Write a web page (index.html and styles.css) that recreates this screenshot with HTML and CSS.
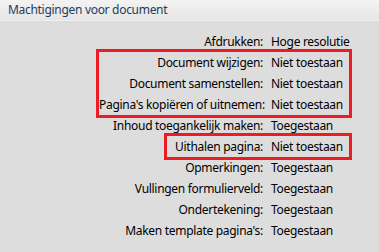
FILE: index.html
```html
<!DOCTYPE html>
<html lang="nl">
<head>
  <meta charset="UTF-8" />
  <title>Machtigingen voor document</title>
  <link rel="stylesheet" href="styles.css">
</head>
<body>
  <div class="panel">
    <div class="panel-header">Machtigingen voor document</div>

    <div class="list">
      <div class="row"><span class="label">Afdrukken:</span><span class="value">Hoge resolutie</span></div>

      <!-- gemarkeerd -->
      <div class="box box-wide">
        <div class="row"><span class="label">Document wijzigen:</span><span class="value">Niet toestaan</span></div>
        <div class="row"><span class="label">Document samenstellen:</span><span class="value">Niet toestaan</span></div>
        <div class="row"><span class="label">Pagina's kopiëren of uitnemen:</span><span class="value">Niet toestaan</span></div>
      </div>

      <div class="row"><span class="label">Inhoud toegankelijk maken:</span><span class="value">Toegestaan</span></div>

      <div class="box box-narrow">
        <div class="row"><span class="label">Uithalen pagina:</span><span class="value">Niet toestaan</span></div>
      </div>

      <div class="row"><span class="label">Opmerkingen:</span><span class="value">Toegestaan</span></div>
      <div class="row"><span class="label">Vullingen formulierveld:</span><span class="value">Toegestaan</span></div>
      <div class="row"><span class="label">Ondertekening:</span><span class="value">Toegestaan</span></div>
      <div class="row"><span class="label">Maken template pagina's:</span><span class="value">Toegestaan</span></div>
    </div>
  </div>
</body>
</html>
```
FILE: styles.css
```css
body {
  margin: 0;
  padding: 0;
  font-family: "Noto Sans", "Open Sans", sans-serif;
  font-size: 12px;
  letter-spacing: -0.3px;
  color: #000;
  background: #dddddd;
}

.panel {
  width: 379px;
  height: 252px;
  overflow: hidden;
}

.panel-header {
  height: 20px;
  line-height: 20px;
  padding-left: 8px;
  font-size: 12px;
  color: #1e3a5f;
  background: linear-gradient(to bottom, #f3f3f3, #e6e6e6);
  border-bottom: 1px solid #f0f0f0;
}

.list {
  padding-top: 10px;
}

.row {
  display: flex;
  align-items: center;
  height: 21px;
  white-space: nowrap;
}

.label {
  flex-shrink: 0;
  width: 263px;
  text-align: right;
}

.value {
  margin-left: 8px;
}

.box {
  border: 3px solid #ec1c24;
  margin-top: -3px;
  margin-bottom: -3px;
  margin-right: 27px;
}

.box-wide {
  margin-left: 96px;
}

.box-wide .label {
  width: 164px;
}

.box-narrow {
  margin-left: 164px;
}

.box-narrow .label {
  width: 96px;
}
```
